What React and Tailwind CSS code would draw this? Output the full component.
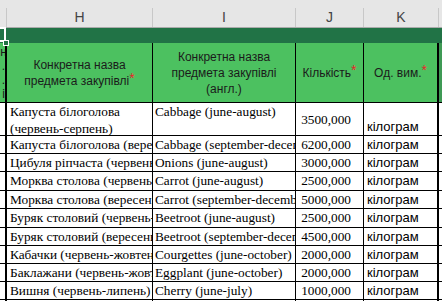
import React from "react";

const rows = [
  { h: "Капуста білоголова (червень-серпень)", i: "Cabbage (june-august)", j: "3500,000", tall: true },
  { h: "Капуста білоголова (вересень-грудень)", i: "Cabbage (september-december)", j: "6200,000" },
  { h: "Цибуля ріпчаста (червень-серпень)", i: "Onions (june-august)", j: "3000,000" },
  { h: "Морква столова (червень-серпень)", i: "Carrot (june-august)", j: "2500,000", hh: "h-[19px]" },
  { h: "Морква столова (вересень-грудень)", i: "Carrot (september-december)", j: "5000,000" },
  { h: "Буряк столовий (червень-серпень)", i: "Beetroot (june-august)", j: "2500,000", hh: "h-[19px]" },
  { h: "Буряк столовий (вересень-грудень)", i: "Beetroot (september-december)", j: "4500,000" },
  { h: "Кабачки (червень-жовтень)", i: "Courgettes (june-october)", j: "2000,000" },
  { h: "Баклажани (червень-жовтень)", i: "Eggplant (june-october)", j: "2000,000" },
  { h: "Вишня (червень-липень)", i: "Cherry (june-july)", j: "1000,000" },
];

const serif = "font-['Liberation_Serif',serif] text-[13.3px] text-black";
const sans = "font-['Liberation_Sans',Arial,sans-serif]";

// red required-field mark in the header
const Star = () => <span className="text-[#e8262b] relative -top-[2px] text-[14px] leading-[0]">*</span>;

const App = () => {
  return (
    <div className={`relative w-[442px] h-[301px] overflow-hidden bg-white ${sans}`}>
      {/* column letters */}
      <div className="flex h-[28px] bg-[#e6e6e6] border-b border-[#ababab] pt-[8px] text-[14px] text-[#444]">
        <div className="w-[7px] border-r border-[#c8c8c8]" />
        <div className="w-[146px] border-r border-[#c8c8c8] flex items-center justify-center">H</div>
        <div className="w-[143px] border-r border-[#c8c8c8] flex items-center justify-center">I</div>
        <div className="w-[68px] border-r border-[#c8c8c8] flex items-center justify-center">J</div>
        <div className="w-[75px] border-r border-[#c8c8c8] flex items-center justify-center">K</div>
        <div className="w-[3px]" />
      </div>

      {/* dark green band */}
      <div className="h-[15px] bg-[#217346]" />

      {/* table header */}
      <div className="flex h-[60px] bg-[#4cc160] border-b border-black text-[12px] leading-[16px] text-[#1b1b1b]">
        <div className="w-[7px] border-r-2 border-black overflow-hidden text-right leading-[14px] pt-[2px] whitespace-nowrap">
          <div className="-mr-[2px]">н</div>
          <div>.</div>
          <div>.</div>
          <div>і</div>
        </div>
        <div className="w-[146px] border-r border-black flex items-center justify-center text-center">
          <div>
            Конкретна назва
            <br />
            предмета закупівлі<Star />
          </div>
        </div>
        <div className="w-[143px] border-r border-black flex items-center justify-center text-center">
          <div>
            Конкретна назва
            <br />
            предмета закупівлі
            <br />
            (англ.)
          </div>
        </div>
        <div className="w-[68px] border-r border-black flex items-center justify-center">
          <div>
            Кількість<Star />
          </div>
        </div>
        <div className="w-[75px] border-r-2 border-black flex items-center justify-center">
          <div>
            Од. вим.<Star />
          </div>
        </div>
        <div className="w-[3px] bg-[#3f9a55]" />
      </div>

      {/* data rows */}
      {rows.map((r, idx) => (
        <div
          key={idx}
          className={`flex border-b border-black ${r.tall ? "h-[33px]" : r.hh || "h-[18px]"}`}
        >
          <div className="w-[7px] border-r-2 border-black" />
          <div
            className={`w-[146px] border-r border-black overflow-hidden pl-[3px] ${serif} ${
              r.tall ? "leading-[17px]" : "whitespace-nowrap leading-[17px]"
            }`}
          >
            {r.tall ? (
              <>
                Капуста білоголова
                <br />
                (червень-серпень)
              </>
            ) : (
              r.h
            )}
          </div>
          <div className={`w-[143px] border-r border-black overflow-hidden whitespace-nowrap pl-[2px] leading-[17px] ${serif}`}>
            {r.i}
          </div>
          <div
            className={`w-[68px] border-r border-black flex justify-end pr-[12px] leading-[17px] ${serif} ${
              r.tall ? "items-center" : "items-start"
            }`}
          >
            {r.j}
          </div>
          <div
            className={`w-[75px] border-r-2 border-black flex pl-[3px] text-[13px] leading-[17px] text-black ${
              r.tall ? "items-end" : "items-start"
            }`}
          >
            кілограм
          </div>
          <div className="w-[3px]" />
        </div>
      ))}
      <div className="flex h-[10px]">
        <div className="w-[7px] border-r-2 border-black" />
        <div className="w-[146px] border-r border-black" />
        <div className="w-[143px] border-r border-black" />
        <div className="w-[68px] border-r border-black" />
        <div className="w-[75px] border-r-2 border-black" />
      </div>

      {/* selected cell marker */}
      <div className="absolute left-0 top-[27px] w-[6px] h-[15px] border-t-2 border-r-2 border-b-2 border-white" />
      <div className="absolute left-[3px] top-[40px] w-[6px] h-[6px] bg-[#217346] border border-white" />
    </div>
  );
};

export default App;
